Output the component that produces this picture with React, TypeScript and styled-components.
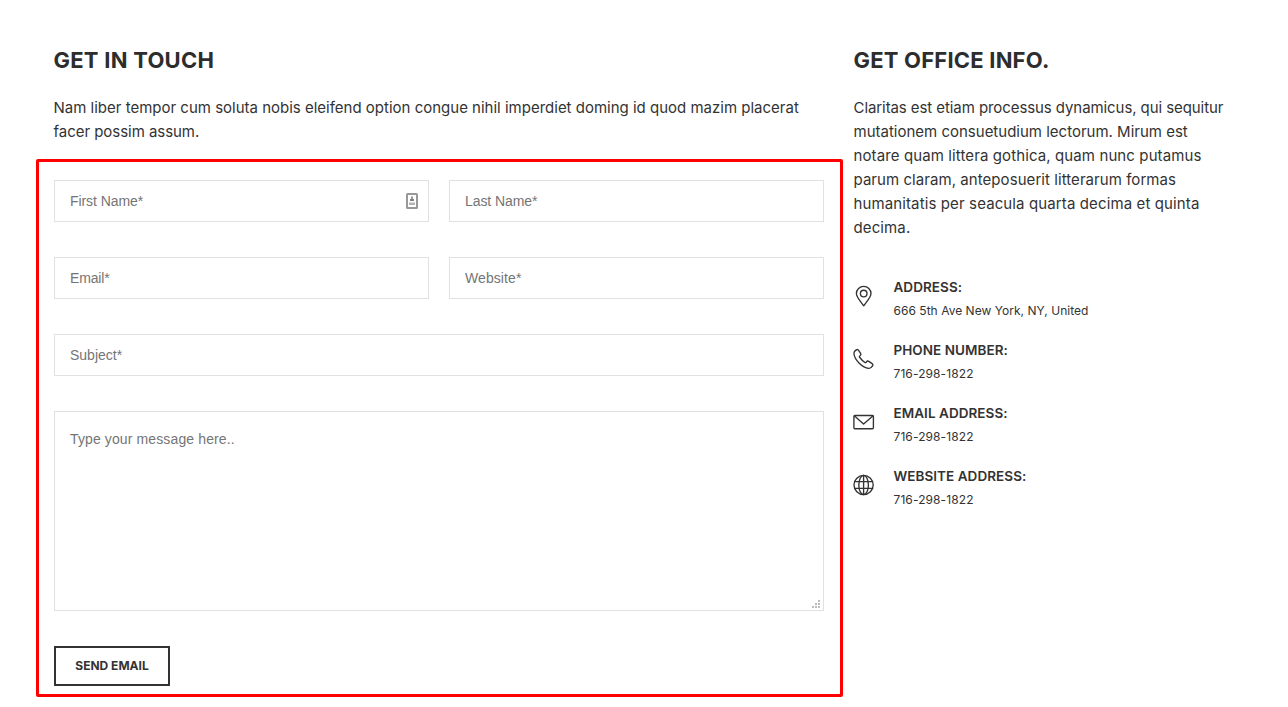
import React from 'react';
import styled, { createGlobalStyle } from 'styled-components';

const ink = '#333333';
const line = '#e1e1e1';

const GlobalStyle = createGlobalStyle`
  *, *::before, *::after { box-sizing: border-box; }
  body {
    margin: 0;
    background: #fff;
    color: ${ink};
    font-family: Inter, sans-serif;
    overflow: hidden;
  }
`;

const Page = styled.main`
  display: grid;
  grid-template-columns: 807px 376px;
  column-gap: 10px;
  align-items: start;
  width: 1288px;
  height: 707px;
  padding: 42px 0 0 36px;
`;

const Column = styled.section`
  display: flex;
  flex-direction: column;
`;

const Intro = styled.header`
  padding-left: 17.5px;
`;

const OfficeIntro = styled.header`
  padding-left: 0.5px;
`;

const Heading = styled.h2<{ $tracking: number }>`
  margin: 0 0 18px;
  font-size: 22px;
  line-height: 36px;
  font-weight: 700;
  letter-spacing: ${p => p.$tracking}px;
  color: #2d2d2d;
`;

const Paragraph = styled.p`
  margin: 0;
  font-size: 15px;
  line-height: 24px;
`;

const TextLine = styled.span<{ $tracking?: number }>`
  display: block;
  white-space: nowrap;
  font-variant-ligatures: none;
  letter-spacing: ${p => p.$tracking ?? 0}px;
`;

const FormPanel = styled.form`
  display: flex;
  flex-direction: column;
  gap: 35px;
  height: 538px;
  margin-top: 15px;
  padding: 18px 16px 8px 15px;
  border: 3px solid #ff0000;
  border-radius: 2px;
`;

const FieldRow = styled.div`
  display: grid;
  grid-auto-flow: column;
  grid-auto-columns: 1fr;
  gap: 20px;
`;

const FieldBox = styled.div`
  position: relative;
  display: flex;
`;

const Input = styled.input<{ $tracking?: number }>`
  width: 100%;
  height: 42px;
  padding: 0 15px;
  border: 1px solid ${line};
  border-radius: 0;
  background: #fff;
  font: 14px 'Liberation Sans', Arial, sans-serif;
  letter-spacing: ${p => p.$tracking ?? 0}px;
  outline: none;
  &::placeholder { color: #757575; opacity: 1; }
`;

const Message = styled.textarea`
  display: block;
  width: 100%;
  height: 200px;
  padding: 15px;
  border: 1px solid ${line};
  border-radius: 0;
  background: #fff;
  font: 14px/24px 'Liberation Sans', Arial, sans-serif;
  letter-spacing: 0.12px;
  resize: none;
  outline: none;
  &::placeholder { color: #757575; opacity: 1; }
`;

const Autofill = styled.svg`
  position: absolute;
  top: 13px;
  right: 11px;
`;

const Grip = styled.svg`
  position: absolute;
  right: 4px;
  bottom: 3px;
`;

const SendButton = styled.button`
  align-self: flex-start;
  width: 116px;
  height: 40px;
  padding: 0 0 1px;
  border: 2px solid ${ink};
  background: #fff;
  color: ${ink};
  font: 700 12px Inter, sans-serif;
`;

const ContactList = styled.ul`
  display: flex;
  flex-direction: column;
  gap: 15px;
  margin: 35px 0 0;
  padding: 0;
  list-style: none;
`;

const ContactItem = styled.li`
  display: grid;
  grid-template-columns: 22px 1fr;
  column-gap: 18.5px;
  align-items: start;
`;

const ContactIcon = styled.svg`
  width: 22px;
  height: 22px;
  margin-top: 10px;
  fill: none;
  stroke: ${ink};
  stroke-width: 1.35;
  stroke-linejoin: round;
  stroke-linecap: round;
`;

const Label = styled.h3`
  margin: 0;
  font-size: 13.5px;
  line-height: 24px;
  font-weight: 600;
  letter-spacing: 0.05px;
`;

const Value = styled.p<{ $tracking: number }>`
  margin: 0;
  font-size: 12px;
  line-height: 24px;
  letter-spacing: ${p => p.$tracking}px;
`;

const officeText: [string, number][] = [
  ['Claritas est etiam processus dynamicus, qui sequitur', -0.08],
  ['mutationem consuetudium lectorum. Mirum est', 0],
  ['notare quam littera gothica, quam nunc putamus', 0.11],
  ['parum claram, anteposuerit litterarum formas', 0.06],
  ['humanitatis per seacula quarta decima et quinta', 0.12],
  ['decima.', 0.12],
];

const contacts = [
  {
    label: 'ADDRESS:',
    value: '666 5th Ave New York, NY, United',
    tracking: 0.03,
    icon: (
      <>
        <path d="M10.7 20.8C8.4 17.3 3.4 12.6 3.4 8.6a7.3 7.3 0 0 1 14.6 0c0 4-5 8.7-7.3 12.2z" />
        <circle cx="10.7" cy="8.5" r="3.3" />
      </>
    ),
  },
  {
    label: 'PHONE NUMBER:',
    value: '716-298-1822',
    tracking: 0.1,
    icon: (
      <path d="M1.8 3.1 3.3 1.9c.8-.6 1.7-.4 2.3.4l2 3c.6.9.3 1.8-.6 2.4-.8.5-.8 1-.2 1.8 1.4 1.9 2.9 3.4 4.8 4.7.8.6 1.3.5 1.8-.2.6-.9 1.5-1.2 2.4-.6l3.3 2.2c.9.6 1 1.5.4 2.3-.9 1.5-2.2 2.7-3.9 2.5C9.5 19.6 1.6 12 1 6c-.1-1.2.1-2.2.8-2.9z" />
    ),
  },
  {
    label: 'EMAIL ADDRESS:',
    value: '716-298-1822',
    tracking: 0.1,
    icon: (
      <>
        <rect x="0.9" y="4.5" width="19.5" height="13.2" rx="1" />
        <path d="m1.5 5 9.1 8L19.8 5" />
      </>
    ),
  },
  {
    label: 'WEBSITE ADDRESS:',
    value: '716-298-1822',
    tracking: 0.1,
    icon: (
      <>
        <circle cx="10.6" cy="11" r="9.6" />
        <ellipse cx="10.6" cy="11" rx="4.8" ry="9.6" />
        <path d="M10.6 1.4v19.2M1.6 7.6h18M1.6 14.4h18" />
      </>
    ),
  },
];

export default function App() {
  return (
    <>
      <GlobalStyle />
      <Page>
        <Column>
          <Intro>
            <Heading $tracking={0.25}>GET IN TOUCH</Heading>
            <Paragraph>
              <TextLine>
                Nam liber tempor cum soluta nobis eleifend option congue nihil imperdiet doming id quod mazim placerat
              </TextLine>
              <TextLine $tracking={-0.04}>facer possim assum.</TextLine>
            </Paragraph>
          </Intro>
          <FormPanel>
            <FieldRow>
              <FieldBox>
                <Input placeholder="First Name*" $tracking={-0.07} />
                <Autofill width="12" height="16" viewBox="0 0 12 16">
                  <rect x="1" y="1" width="10" height="14" rx="0.5" fill="#fff" stroke="#999" strokeWidth="2" />
                  <rect x="5" y="3.5" width="2" height="2.5" fill="#999" />
                  <rect x="4" y="6" width="4" height="2" fill="#808080" />
                  <rect x="3" y="9.5" width="6" height="2.5" fill="#b5b5b5" />
                </Autofill>
              </FieldBox>
              <FieldBox>
                <Input placeholder="Last Name*" $tracking={-0.07} />
              </FieldBox>
            </FieldRow>
            <FieldRow>
              <Input placeholder="Email*" $tracking={-0.15} />
              <Input placeholder="Website*" $tracking={0.08} />
            </FieldRow>
            <Input placeholder="Subject*" />
            <FieldBox>
              <Message placeholder="Type your message here.." />
              <Grip width="8" height="8" viewBox="0 0 8 8" fill="#bdbdbd">
                <path d="M6 0h2v2H6zM6 3h2v2H6zM6 6h2v2H6zM3 3h2v2H3zM3 6h2v2H3zM0 6h2v2H0z" />
              </Grip>
            </FieldBox>
            <SendButton type="button">SEND EMAIL</SendButton>
          </FormPanel>
        </Column>
        <Column>
          <OfficeIntro>
            <Heading $tracking={0.2}>GET OFFICE INFO.</Heading>
            <Paragraph>
              {officeText.map(([text, tracking]) => (
                <TextLine key={text} $tracking={tracking}>{text}</TextLine>
              ))}
            </Paragraph>
          </OfficeIntro>
          <ContactList>
            {contacts.map(c => (
              <ContactItem key={c.label}>
                <ContactIcon viewBox="0 0 22 22">{c.icon}</ContactIcon>
                <div>
                  <Label>{c.label}</Label>
                  <Value $tracking={c.tracking}>{c.value}</Value>
                </div>
              </ContactItem>
            ))}
          </ContactList>
        </Column>
      </Page>
    </>
  );
}
